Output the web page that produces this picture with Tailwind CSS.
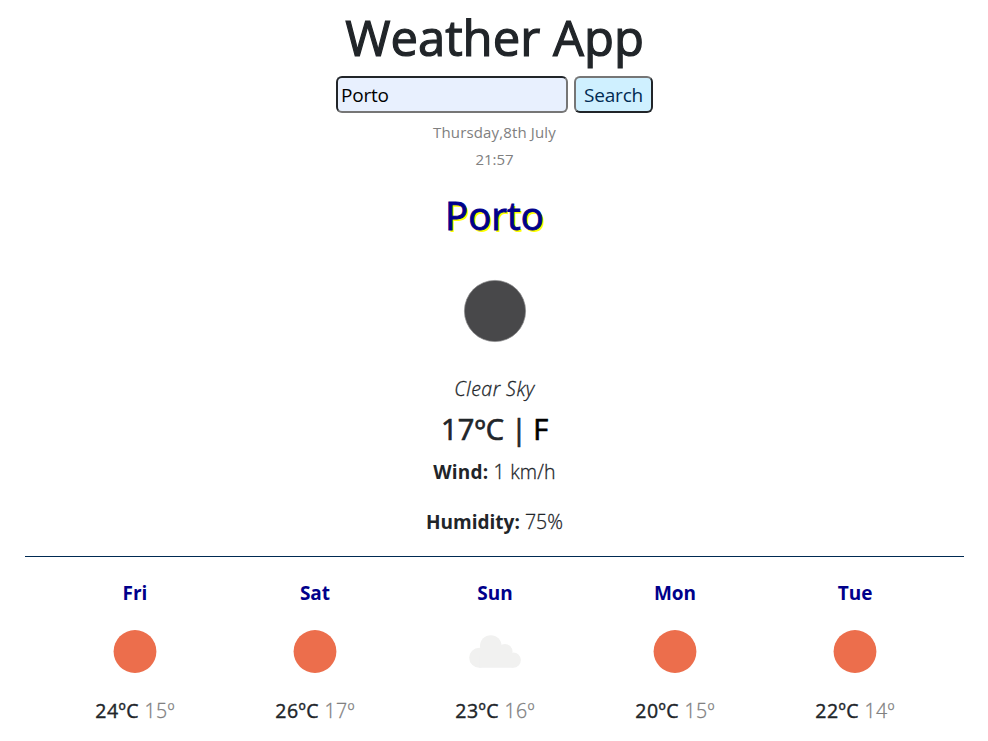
<!DOCTYPE html>
<html lang="en">
<head>
<meta charset="utf-8">
<title>Weather App</title>
<script src="https://cdn.jsdelivr.net/npm/@tailwindcss/browser@4"></script>
</head>
<body class="bg-white h-[741px] overflow-hidden font-['Open_Sans','Noto_Sans',sans-serif] text-[19.5px] font-light text-[#212529] [-webkit-text-stroke:0.3px]">
<main class="flex flex-col items-center pl-px whitespace-nowrap">
  <h1 class="h-[75px] leading-[75px] text-[49px] font-normal [-webkit-text-stroke:1.2px]">Weather App</h1>
  <form class="mt-px flex gap-[6px] h-[37px] [-webkit-text-stroke:0]">
    <input type="text" value="Porto" class="w-[232px] h-[37px] rounded-[6px] border-2 border-t-[#212529] border-l-[#212529] border-b-[#767676] border-r-[#767676] bg-[#e8f0fe] pl-[3px] text-[19px] tracking-[-0.2px] font-normal text-black outline-none">
    <button type="button" class="w-[79px] h-[37px] rounded-[6px] border-2 border-t-[#767676] border-l-[#767676] border-b-[#212529] border-r-[#212529] bg-[#cff0ff] pt-px text-[19px] tracking-[-0.2px] font-normal text-[#002a52]">Search</button>
  </form>
  <div class="mt-[6px] h-[27px] leading-[27px] text-[15px] tracking-[0.15px] font-normal text-[#808080] [-webkit-text-stroke:0]">Thursday,8th July</div>
  <div class="h-[27px] leading-[27px] text-[15px] font-normal text-[#808080] [-webkit-text-stroke:0]">21:57</div>
  <h2 class="mt-[19px] h-[48px] leading-[47px] text-[38.5px] font-normal text-[#00008b] [-webkit-text-stroke:0.9px] [text-shadow:2px_2px_0_#ff0]">Porto</h2>
  <svg class="mt-[21px] h-[100px] w-[100px]" viewBox="0 0 100 100"><circle cx="50" cy="50" r="30.6" fill="#48484a" stroke="#8a8a8b" stroke-width=".7"/></svg>
  <div class="mt-[13px] h-[30px] leading-[30px] italic tracking-[0.5px]">Clear Sky</div>
  <div class="mt-[7px] h-[36px] leading-[36px] text-[29px] tracking-[-0.2px] font-normal [-webkit-text-stroke:0.7px]"><span class="tracking-[0.3px]">17ºC</span><span class="[word-spacing:-0.7px]"> | </span><span class="text-black">F</span></div>
  <div class="mt-[10px] h-[30px] leading-[30px] tracking-[0.2px]"><b class="font-bold text-[19px] [-webkit-text-stroke:0]">Wind:</b> 1 km/h</div>
  <div class="mt-[20px] h-[30px] leading-[30px]"><b class="font-bold text-[19px] [-webkit-text-stroke:0]">Humidity:</b> 75%</div>
</main>
<hr class="mt-[19px] ml-[25px] w-[939px] border-0 h-px bg-[#002a52]">
<section class="mt-[21px] ml-[45px] w-[900px] grid grid-cols-5 text-center whitespace-nowrap">
  <div class="flex flex-col items-center">
    <h3 class="h-[30px] leading-[30px] text-[19px] font-bold text-[#00008b] [-webkit-text-stroke:0]">Fri</h3>
    <svg class="mt-[8px] h-[70px] w-[70px]" viewBox="0 0 70 70"><circle cx="35" cy="35.5" r="21.4" fill="#ec6e4c"/></svg>
    <p class="mt-[10px] h-[30px] leading-[30px] tracking-[0.3px]"><span class="font-normal tracking-[0.5px] [-webkit-text-stroke:0.4px]">24ºC</span> <span class="text-[#808080]">15º</span></p>
  </div>
  <div class="flex flex-col items-center">
    <h3 class="h-[30px] leading-[30px] text-[19px] font-bold text-[#00008b] [-webkit-text-stroke:0]">Sat</h3>
    <svg class="mt-[8px] h-[70px] w-[70px]" viewBox="0 0 70 70"><circle cx="35" cy="35.5" r="21.4" fill="#ec6e4c"/></svg>
    <p class="mt-[10px] h-[30px] leading-[30px] tracking-[0.3px]"><span class="font-normal tracking-[0.5px] [-webkit-text-stroke:0.4px]">26ºC</span> <span class="text-[#808080]">17º</span></p>
  </div>
  <div class="flex flex-col items-center">
    <h3 class="h-[30px] leading-[30px] text-[19px] font-bold text-[#00008b] [-webkit-text-stroke:0]">Sun</h3>
    <svg class="mt-[8px] h-[70px] w-[70px]" viewBox="0 0 70 70" fill="#f1f1f0"><circle cx="19.2" cy="41.7" r="10"/><circle cx="30.8" cy="30" r="10.8"/><circle cx="45" cy="35.5" r="7.5"/><circle cx="53.3" cy="44.1" r="7.6"/><path d="M19.2 51.7V34H45L53.3 44V51.7Z"/></svg>
    <p class="mt-[10px] h-[30px] leading-[30px] tracking-[0.3px]"><span class="font-normal tracking-[0.5px] [-webkit-text-stroke:0.4px]">23ºC</span> <span class="text-[#808080]">16º</span></p>
  </div>
  <div class="flex flex-col items-center">
    <h3 class="h-[30px] leading-[30px] text-[19px] font-bold text-[#00008b] [-webkit-text-stroke:0]">Mon</h3>
    <svg class="mt-[8px] h-[70px] w-[70px]" viewBox="0 0 70 70"><circle cx="35" cy="35.5" r="21.4" fill="#ec6e4c"/></svg>
    <p class="mt-[10px] h-[30px] leading-[30px] tracking-[0.3px]"><span class="font-normal tracking-[0.5px] [-webkit-text-stroke:0.4px]">20ºC</span> <span class="text-[#808080]">15º</span></p>
  </div>
  <div class="flex flex-col items-center">
    <h3 class="h-[30px] leading-[30px] text-[19px] font-bold text-[#00008b] [-webkit-text-stroke:0]">Tue</h3>
    <svg class="mt-[8px] h-[70px] w-[70px]" viewBox="0 0 70 70"><circle cx="35" cy="35.5" r="21.4" fill="#ec6e4c"/></svg>
    <p class="mt-[10px] h-[30px] leading-[30px] tracking-[0.3px]"><span class="font-normal tracking-[0.5px] [-webkit-text-stroke:0.4px]">22ºC</span> <span class="text-[#808080]">14º</span></p>
  </div>
</section>
</body>
</html>
